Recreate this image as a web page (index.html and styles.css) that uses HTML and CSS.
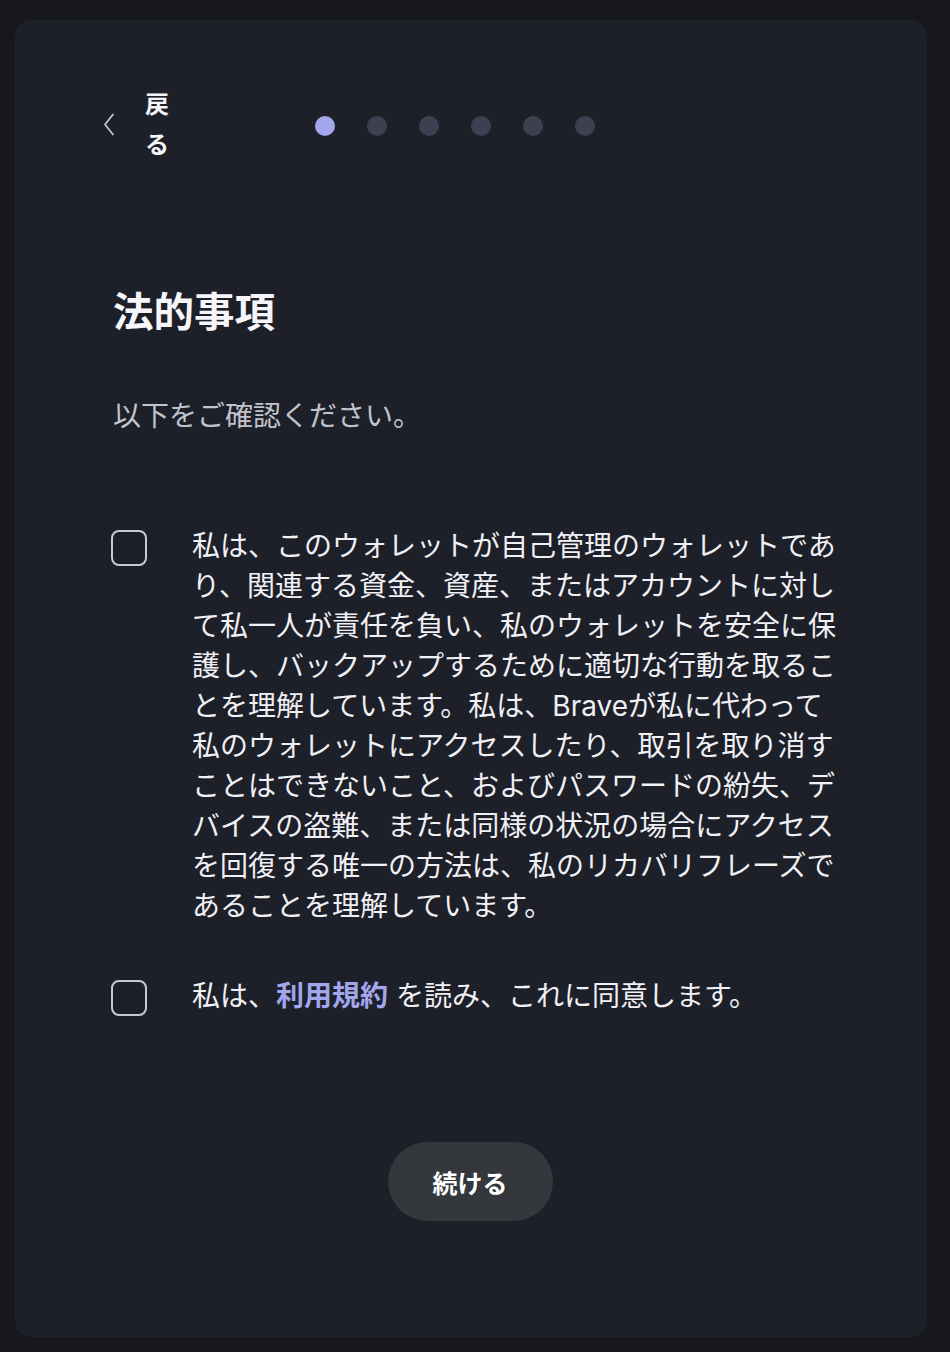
FILE: index.html
```html
<!DOCTYPE html>
<html lang="ja">
<head>
<meta charset="utf-8">
<link rel="stylesheet" href="styles.css">
</head>
<body>
<div class="card">
  <div class="header">
    <button class="back">
      <svg class="chev" width="12" height="24" viewBox="0 0 12 24"><path d="M10 1.5 L2 11.5 L10 21.5" fill="none" stroke="#c4c6cf" stroke-width="1.8" stroke-linecap="round" stroke-linejoin="round"/></svg>
      <span class="back-text">戻る</span>
    </button>
    <div class="dots">
      <span class="dot active"></span>
      <span class="dot"></span>
      <span class="dot"></span>
      <span class="dot"></span>
      <span class="dot"></span>
      <span class="dot"></span>
    </div>
  </div>
  <h1 class="title">法的事項</h1>
  <p class="subtitle">以下をご確認ください。</p>
  <div class="terms">
    <label class="row">
      <span class="box"></span>
      <span class="text">私は、このウォレットが自己管理のウォレットであり、関連する資金、資産、またはアカウントに対して私一人が責任を負い、私のウォレットを安全に保護し、バックアップするために適切な行動を取ることを理解しています。私は、Braveが私に代わって私のウォレットにアクセスしたり、取引を取り消すことはできないこと、およびパスワードの紛失、デバイスの盗難、または同様の状況の場合にアクセスを回復する唯一の方法は、私のリカバリフレーズであることを理解しています。</span>
    </label>
    <label class="row">
      <span class="box"></span>
      <span class="text">私は、<a class="link">利用規約</a> を読み、これに同意します。</span>
    </label>
  </div>
  <div class="actions">
    <button class="continue">続ける</button>
  </div>
</div>
</body>
</html>
```
FILE: styles.css
```css
html, body {
  margin: 0;
  padding: 0;
  background: #17181c;
}
body {
  font-family: "Inter", "Noto Sans CJK JP", sans-serif;
  color: #f0f0f5;
  padding: 20px 0 15px 15px;
}
.card {
  box-sizing: border-box;
  width: 912px;
  height: 1317px;
  background: #1e2029;
  border-radius: 16px;
  padding: 65px 88px 0 88px;
}
.header {
  display: flex;
  align-items: center;
  height: 80px;
}
.back {
  display: flex;
  align-items: center;
  background: none;
  border: none;
  padding: 0;
  margin: 0;
  font: inherit;
  color: #f5f5fa;
  cursor: pointer;
}
.chev {
  display: block;
  margin-right: 30px;
}
.back-text {
  display: block;
  width: 28px;
  font-size: 24px;
  font-weight: 700;
  line-height: 40px;
  text-align: left;
}
.dots {
  display: flex;
  gap: 32px;
  margin-left: 142px;
  margin-top: 2px;
}
.dot {
  width: 20px;
  height: 20px;
  border-radius: 50%;
  background: #3e4051;
}
.dot.active {
  background: #a2a6ec;
}
.title {
  margin: 124px 0 0 10px;
  font-size: 40.5px;
  line-height: 48px;
  font-weight: 700;
  color: #f5f5fa;
}
.subtitle {
  margin: 59px 0 0 10px;
  font-size: 28px;
  line-height: 40px;
  color: #c2c4cc;
}
.terms {
  margin: 90px 0 0 10px;
  display: flex;
  flex-direction: column;
  gap: 50px;
}
.row {
  display: flex;
  align-items: flex-start;
}
.box {
  flex: none;
  box-sizing: border-box;
  width: 36px;
  height: 36px;
  margin: 4px 45px 0 -2px;
  border: 2px solid #c8c9d2;
  border-radius: 8px;
}
.text {
  width: 652px;
  font-size: 28px;
  line-height: 40px;
  color: #f0f0f5;
}
.link {
  color: #a2a6ec;
  font-weight: 700;
}
.actions {
  display: flex;
  justify-content: center;
  margin-top: 126px;
  padding-right: 2px;
}
.continue {
  width: 165px;
  height: 79px;
  border: none;
  border-radius: 40px;
  background: #34383c;
  color: #ffffff;
  font-family: inherit;
  font-size: 25px;
  font-weight: 700;
}
```
